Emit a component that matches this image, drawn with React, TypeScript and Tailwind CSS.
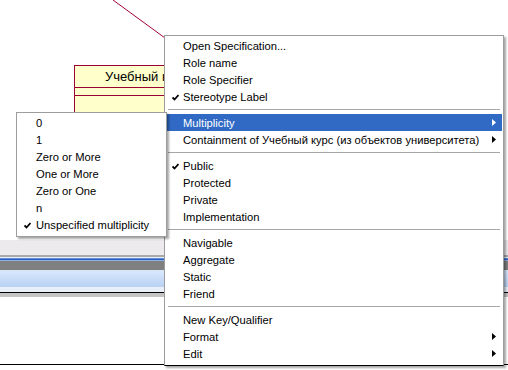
import React from 'react';

type Item = { label: string; checked?: boolean; sub?: boolean; active?: boolean } | 'sep';

const mainItems: Item[] = [
  { label: 'Open Specification...' },
  { label: 'Role name' },
  { label: 'Role Specifier' },
  { label: 'Stereotype Label', checked: true },
  'sep',
  { label: 'Multiplicity', sub: true, active: true },
  { label: 'Containment of Учебный курс (из объектов университета)', sub: true },
  'sep',
  { label: 'Public', checked: true },
  { label: 'Protected' },
  { label: 'Private' },
  { label: 'Implementation' },
  'sep',
  { label: 'Navigable' },
  { label: 'Aggregate' },
  { label: 'Static' },
  { label: 'Friend' },
  'sep',
  { label: 'New Key/Qualifier' },
  { label: 'Format', sub: true },
  { label: 'Edit', sub: true },
];

const subItems: Item[] = [
  { label: '0' },
  { label: '1' },
  { label: 'Zero or More' },
  { label: 'One or More' },
  { label: 'Zero or One' },
  { label: 'n' },
  { label: 'Unspecified multiplicity', checked: true },
];

const Check = ({ color }: { color: string }) => (
  <svg width="7" height="7" viewBox="0 0 7 7" className="absolute left-[6px] top-[6px]">
    <path d="M0.5 3.5 L2.5 5.5 L6.5 1" stroke={color} strokeWidth="1.8" fill="none" />
  </svg>
);

const Arrow = ({ color }: { color: string }) => (
  <svg width="4" height="7" viewBox="0 0 4 7" className="absolute right-[6px] top-[5px]">
    <polygon points="0,0 4,3.5 0,7" fill={color} />
  </svg>
);

const MenuRows = ({ items, pl }: { items: Item[]; pl: string }) => (
  <>
    {items.map((it, i) =>
      it === 'sep' ? (
        <div key={i} className="h-[9px] flex items-center px-[2px]">
          <div className="h-px w-full bg-[#a6a6a6]" />
        </div>
      ) : (
        <div
          key={i}
          className={`relative h-[17px] pt-px leading-[16px] whitespace-nowrap ${pl} ${
            it.active ? 'bg-[#316ac5] text-white' : 'text-black'
          }`}
        >
          {it.checked && <Check color={it.active ? '#fff' : '#000'} />}
          {it.label}
          {it.sub && <Arrow color={it.active ? '#fff' : '#000'} />}
        </div>
      )
    )}
  </>
);

export default function App() {
  return (
    <div
      className="relative w-[508px] h-[370px] overflow-hidden bg-white text-[11.2px]"
      style={{ fontFamily: '"Liberation Sans", Arial, sans-serif' }}
    >
      {/* diagram canvas */}
      <div className="relative h-[240px]">
        <svg width="508" height="240" className="absolute left-0 top-0">
          <line x1="113" y1="0" x2="165" y2="38" stroke="#a0003c" strokeWidth="1" />
        </svg>
        <div className="absolute left-[74px] top-[65px] w-[180px] h-[80px] bg-[#ffffcc] border border-[#990033]">
          <div className="h-[21px] leading-[22px] pl-[30px] text-[13px] text-black">Учебный курс</div>
          <div className="h-[8px] border-t border-[#990033]" />
          <div className="border-t border-[#990033]" />
        </div>
      </div>

      {/* lower window chrome */}
      <div className="h-[15px] bg-[#edeaed]" />
      <div className="h-[2px] bg-[#a9a9a9]" />
      <div className="h-px bg-[#e8eefa]" />
      <div className="h-px bg-[#5a8ad8]" />
      <div className="h-px bg-[#2e5fbf]" />
      <div className="h-px bg-[#8fb0e6]" />
      <div className="h-[9px] bg-[#808080]" />
      <div className="h-[2px] bg-[#d8e6fa]" />
      <div className="h-[15px] bg-gradient-to-b from-[#d6e6fd] to-[#b9d1f3]" />
      <div className="h-[5px] bg-[#e9eff9]" />
      <div className="h-px bg-black" />
      <div className="h-[4px] bg-[#c4c4c4]" />
      <div className="h-[67px] bg-white" />
      <div className="h-px bg-black" />

      {/* context menu */}
      <div className="absolute left-[164px] top-[35px] w-[340px] h-[331px] bg-white border border-[#9d9d9d] border-b-black pt-px pb-[2px] px-px shadow-[2px_2px_2px_rgba(0,0,0,0.35)]">
        <MenuRows items={mainItems} pl="pl-[17px]" />
      </div>

      {/* submenu */}
      <div className="absolute left-[16px] top-[112px] w-[151px] h-[125px] bg-white border border-[#9d9d9d] pt-px pb-[2px] px-px shadow-[2px_2px_2px_rgba(0,0,0,0.35)]">
        <MenuRows items={subItems} pl="pl-[18px]" />
      </div>
    </div>
  );
}
